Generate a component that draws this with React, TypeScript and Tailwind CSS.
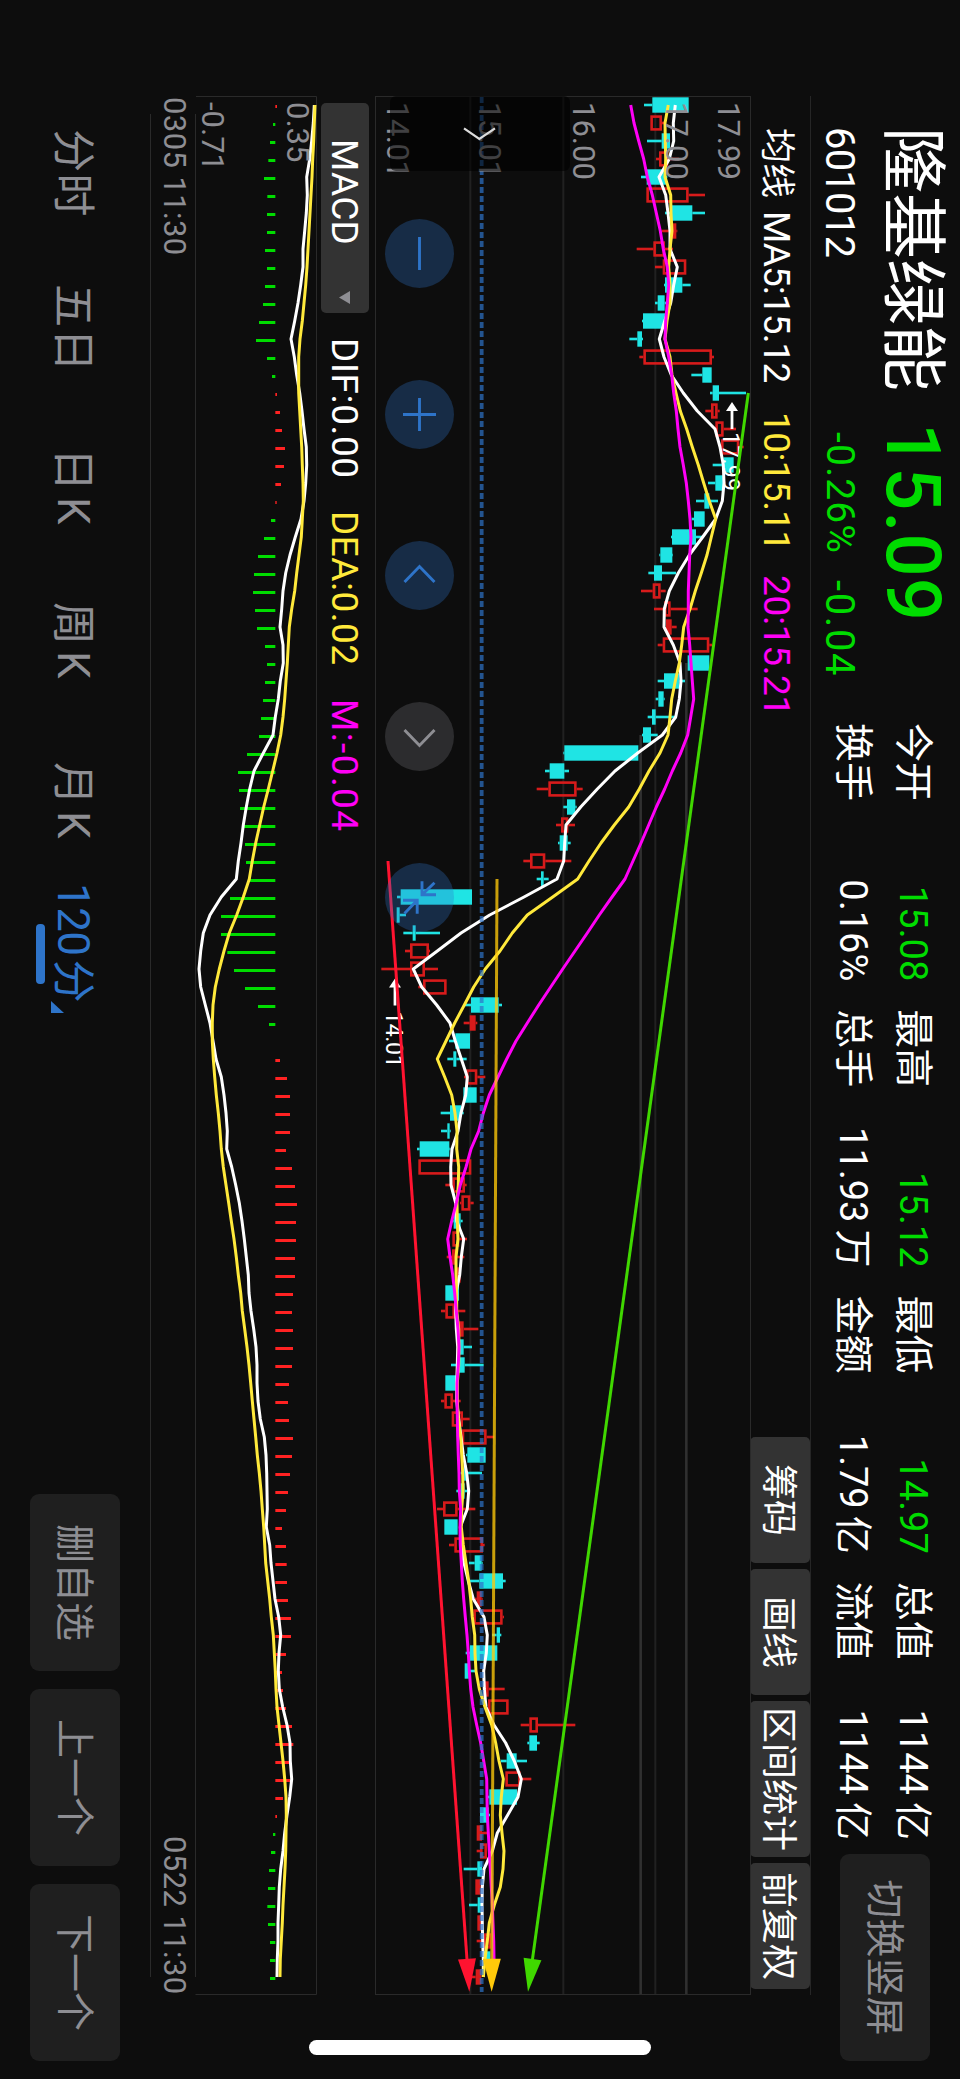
import React from 'react'

type Candle = [up: 0 | 1, bodyLow: number, bodyHigh: number, low: number, high: number]

// Levels are stored in thirds of a pixel above the panel origin
const STEP = 18
const px = (i: number) => 9 + i * STEP
const priceY = (v: number) => 391 - v / 3
const macdY = (v: number) => 177 - v / 3

const candles: Candle[] = [
  [0, 877, 986, 852, 986], [1, 871, 906, 871, 918], [0, 905, 930, 861, 930], [1, 897, 925, 888, 957], [0, 860, 918, 843, 922],
  [1, 859, 986, 859, 1035], [0, 930, 997, 915, 1035], [1, 933, 949, 905, 952], [1, 880, 915, 830, 939], [1, 908, 979, 885, 979],
  [0, 915, 967, 912, 992], [0, 893, 914, 885, 918], [0, 849, 915, 846, 915], [0, 832, 846, 808, 849], [1, 850, 1056, 838, 1062],
  [0, 1027, 1055, 994, 1055], [0, 1058, 1077, 1050, 1158], [1, 1053, 1073, 1036, 1079], [1, 1066, 1091, 1063, 1128], [1, 1083, 1138, 1083, 1151],
  [0, 1090, 1121, 1058, 1121], [0, 1066, 1092, 1044, 1092], [0, 1033, 1048, 1008, 1074], [0, 1002, 1034, 995, 1034], [0, 936, 1008, 933, 1028],
  [0, 901, 937, 898, 939], [0, 882, 906, 865, 948], [1, 878, 902, 843, 917], [1, 912, 932, 882, 1013], [1, 918, 935, 918, 950],
  [1, 908, 1048, 893, 1056], [0, 983, 1048, 983, 1048], [0, 912, 958, 893, 975], [0, 895, 911, 887, 914], [0, 876, 887, 863, 950],
  [0, 849, 873, 846, 893], [0, 613, 835, 610, 835], [0, 569, 613, 555, 627], [1, 565, 650, 530, 668], [0, 621, 646, 610, 650],
  [1, 603, 625, 588, 645], [0, 599, 623, 594, 632], [1, 510, 556, 490, 634], [0, 543, 551, 530, 566], [0, 122, 336, 111, 336],
  [0, 110, 119, 110, 138], [0, 158, 167, 130, 240], [1, 150, 207, 135, 210], [1, 150, 195, 64, 234], [1, 189, 260, 175, 260],
  [0, 333, 416, 314, 426], [1, 329, 347, 311, 352], [0, 286, 330, 267, 330], [0, 280, 289, 262, 320], [1, 318, 352, 312, 376],
  [0, 310, 350, 310, 350], [0, 270, 303, 242, 311], [0, 262, 269, 243, 272], [0, 179, 268, 171, 271], [1, 175, 334, 175, 334],
  [1, 277, 315, 256, 320], [1, 304, 331, 300, 341], [0, 281, 302, 278, 308], [1, 277, 298, 277, 321], [1, 276, 290, 260, 313],
  [1, 288, 302, 288, 302], [0, 256, 297, 256, 297], [1, 256, 285, 243, 316], [1, 293, 311, 293, 355], [0, 296, 311, 296, 336],
  [0, 297, 314, 273, 371], [0, 256, 290, 256, 290], [1, 253, 279, 243, 302], [1, 275, 309, 275, 329], [1, 305, 380, 305, 403],
  [0, 322, 377, 318, 377], [0, 312, 320, 302, 366], [0, 302, 314, 289, 328], [1, 249, 293, 231, 346], [0, 253, 293, 253, 293],
  [1, 283, 369, 267, 374], [0, 344, 365, 327, 368], [0, 358, 429, 326, 437], [1, 350, 365, 345, 368], [1, 340, 428, 340, 432],
  [0, 410, 420, 396, 424], [0, 330, 412, 317, 412], [0, 314, 326, 314, 345], [1, 370, 386, 370, 434], [1, 384, 446, 384, 446],
  [1, 508, 534, 482, 646], [0, 508, 531, 502, 539], [0, 440, 470, 422, 501], [1, 436, 482, 436, 514], [0, 388, 471, 382, 471],
  [0, 360, 386, 360, 390], [1, 350, 366, 350, 382], [1, 360, 381, 350, 381], [0, 352, 366, 311, 366], [1, 346, 362, 346, 362],
  [0, 353, 364, 327, 364], [1, 352, 364, 352, 364], [1, 370, 393, 350, 393], [0, 370, 391, 370, 391], [1, 347, 364, 335, 364],
]

const ma5 = [
  946, 940, 941, 928, 897, 917, 924, 930, 930, 952, 941, 932, 914, 898, 912, 934, 970, 1012, 1065, 1080, 1090, 1092, 1087, 1067, 1028,
  988, 955, 928, 913, 912, 940, 960, 963, 958, 947, 907, 833, 765, 712, 662, 618, 614, 611, 591, 492, 389, 303, 232, 160, 185, 230,
  270, 286, 304, 322, 317, 303, 294, 276, 272, 273, 287, 290, 311, 304, 299, 288, 287, 289, 293, 292, 290, 290, 296, 303, 310, 320,
  326, 322, 301, 305, 312, 325, 340, 372, 382, 379, 371, 373, 378, 402, 437, 463, 484, 474, 443, 412, 397, 372, 367, 366, 367, 368,
  370, 370,
]

const ma10 = [
  925, 915, 916, 917, 915, 932, 933, 936, 930, 926, 930, 930, 921, 915, 930, 936, 948, 961, 980, 997, 1015, 1031, 1048, 1067, 1054,
  1041, 1024, 1006, 990, 971, 965, 958, 946, 935, 930, 924, 900, 867, 838, 806, 763, 723, 687, 653, 578, 502, 457, 420, 376, 341, 313,
  284, 258, 232, 254, 275, 285, 291, 290, 296, 295, 291, 292, 294, 288, 288, 290, 290, 296, 297, 296, 292, 292, 295, 302, 305, 308,
  309, 305, 304, 310, 318, 326, 332, 337, 344, 345, 348, 358, 375, 395, 407, 417, 430, 424, 421, 426, 432, 429, 421, 403, 388, 382,
  375, 370,
]

const ma20 = [
  812, 822, 836, 851, 862, 877, 889, 901, 910, 922, 926, 922, 917, 915, 926, 935, 941, 949, 954, 960, 970, 979, 985, 990, 993, 989,
  987, 985, 985, 984, 989, 993, 997, 1001, 992, 983, 962, 937, 914, 889, 866, 843, 819, 795, 756, 718, 682, 645, 608, 572, 536, 502,
  468, 440, 414, 388, 370, 356, 333, 318, 301, 289, 275, 263, 270, 278, 284, 289, 294, 297, 295, 291, 291, 292, 293, 295, 297, 298,
  302, 300, 301, 304, 307, 311, 316, 321, 325, 328, 332, 339, 350, 362, 371, 380, 381, 382, 385, 388, 391, 394, 397, 399, 401, 402,
]

const macd = [
  411, 399, 390, 385, 372, 382, 381, 381, 375, 381, 375, 369, 357, 348, 381, 396, 411, 420, 426, 435, 432, 423, 410, 393, 372, 354,
  342, 339, 345, 351, 375, 381, 375, 369, 363, 357, 321, 294, 297, 300, 310, 315, 318, 327, 270, 243, 243, 262, 282, 315, 354, 387,
  406, 420, 441, 450, 450, 450, 438, 456, 465, 471, 468, 468, 465, 465, 459, 456, 459, 459, 456, 447, 444, 447, 459, 456, 450, 444,
  438, 426, 438, 440, 441, 444, 453, 453, 438, 426, 429, 438, 456, 460, 450, 450, 429, 411, 399, 393, 387, 384, 382, 384, 390, 390,
  390,
]

const dif = [
  523, 520, 515, 509, 500, 502, 499, 494, 489, 489, 482, 474, 464, 453, 463, 470, 479, 486, 492, 499, 500, 497, 492, 483, 466, 450,
  437, 429, 425, 420, 429, 430, 421, 415, 406, 399, 370, 342, 329, 319, 310, 303, 295, 289, 244, 210, 190, 182, 177, 182, 196, 210,
  219, 228, 244, 252, 258, 262, 260, 275, 287, 298, 306, 313, 319, 325, 327, 333, 341, 348, 351, 351, 354, 361, 373, 378, 380, 381,
  382, 379, 389, 393, 399, 405, 416, 422, 417, 415, 418, 428, 441, 450, 451, 455, 449, 441, 434, 429, 422, 418, 416, 414, 414, 412,
  411,
]

const dea = [
  525, 523, 521, 518, 516, 513, 510, 507, 504, 501, 497, 492, 487, 480, 476, 476, 476, 479, 482, 485, 487, 489, 490, 487, 484, 477,
  470, 464, 455, 448, 445, 442, 438, 434, 429, 422, 411, 398, 385, 371, 359, 347, 337, 328, 310, 290, 268, 252, 238, 226, 219, 217,
  217, 220, 224, 229, 235, 240, 244, 250, 258, 266, 274, 282, 289, 295, 302, 307, 314, 321, 327, 332, 337, 342, 347, 352, 358, 363,
  367, 371, 374, 377, 383, 389, 394, 400, 403, 406, 408, 411, 417, 423, 429, 434, 438, 439, 438, 437, 435, 432, 429, 427, 424, 421,
  420,
]

const line = (data: number[], y: (v: number) => number) => data.map((v, i) => `${px(i)},${y(v).toFixed(1)}`).join(' ')

const stats = [
  { label: '今开', value: '15.08', green: true },
  { label: '最高', value: '15.12', green: true },
  { label: '最低', value: '14.97', green: true },
  { label: '总值', value: '1144', unit: '亿' },
  { label: '换手', value: '0.16%' },
  { label: '总手', value: '11.93', unit: '万' },
  { label: '金额', value: '1.79', unit: '亿' },
  { label: '流值', value: '1144', unit: '亿' },
]

function Header() {
  return (
    <header className="flex h-[149px] pl-[127px]">
      <div className="flex w-[596px] flex-col">
        <div className="flex h-[90px] items-center">
          <h1 className="w-[296px] pt-[7px] text-[66px] leading-none font-normal whitespace-nowrap">隆基绿能</h1>
          <span className="pt-[5px] text-[76px] leading-none font-medium tracking-[1px] text-[#00dc00]">15.09</span>
        </div>
        <div className="flex h-[60px] items-center pt-[3px] text-[40px] leading-none">
          <span className="w-[305px] tracking-[-0.8px]">601012</span>
          <span className="w-[148px] text-[39px] tracking-[1.1px] text-[#00dc00]">-0.26%</span>
          <span className="tracking-[1.6px] text-[#00dc00]">-0.04</span>
        </div>
      </div>
      <div className="mt-[17px] grid h-[120px] w-[1117px] grid-cols-4 grid-rows-2 gap-x-7 text-[38px] leading-none">
        {stats.map((s, i) => (
          <div key={i} className="flex items-center justify-between">
            <span className="text-[39px]">{s.label}</span>
            <span className={s.green ? 'text-[#00dc00]' : 'text-white'}>
              {s.value}
              {s.unit && <span className="ml-[7px]">{s.unit}</span>}
            </span>
          </div>
        ))}
      </div>
      <button className="mt-[30px] ml-[14px] h-[90px] w-[207px] rounded-[9px] bg-[#1f1f1f] pt-[3px] text-[39px] leading-none text-[#8e8e93]">
        切换竖屏
      </button>
    </header>
  )
}

function MaRow() {
  return (
    <div className="ml-[96px] flex h-[61px] w-[1899px] items-center border-t border-[#262626] pl-8 text-[37px] leading-none tracking-[-0.3px]">
      <span className="w-[83px] pt-[6px] text-[35px] tracking-normal">均线</span>
      <span className="w-[201px] pt-[6px] tracking-[-0.9px]">MA5:15.12</span>
      <span className="w-[163px] pt-[6px] tracking-[-0.6px] text-[#ffe93b]">10:15.11</span>
      <span className="pt-[6px] tracking-[-0.3px] text-[#ff00f6]">20:15.21</span>
      <div className="mr-[6px] ml-auto flex gap-[6px] text-[36px] tracking-normal">
        <button className="h-[60px] w-[126px] rounded-[5px] bg-[#333] pt-1">筹码</button>
        <button className="h-[60px] w-[126px] rounded-[5px] bg-[#333] pt-1">画线</button>
        <button className="h-[60px] w-[156px] rounded-[5px] bg-[#333] pt-1">区间统计</button>
        <button className="h-[60px] w-[126px] rounded-[5px] bg-[#333] pt-1">前复权</button>
      </div>
    </div>
  )
}

function CandleMark({ c, i }: { c: Candle; i: number }) {
  const [up, lo, hi, low, high] = c
  const x = px(i)
  const color = up ? '#d71b1b' : '#1fe4e4'
  const top = priceY(hi)
  const h = (hi - lo) / 3
  const hollow = up && h > 6
  return (
    <g>
      {high > hi && <rect x={x - 1.3} y={priceY(high)} width={2.6} height={(high - hi) / 3} fill={color} />}
      {lo > low && <rect x={x - 1.3} y={priceY(lo)} width={2.6} height={(lo - low) / 3} fill={color} />}
      {hollow ? (
        <rect x={x - 6.4} y={top + 1.3} width={12.8} height={h - 2.6} fill="none" stroke={color} strokeWidth={2.6} />
      ) : (
        <rect x={x - 7.7} y={top} width={15.4} height={h} fill={color} />
      )}
    </g>
  )
}

// Trend line ending in a solid arrow head
function Trend({ x1, v1, v2, color, opacity = 1 }: { x1: number; v1: number; v2: number; color: string; opacity?: number }) {
  const x2 = 1895.7
  const y1 = priceY(v1)
  const y2 = priceY(v2)
  const angle = (Math.atan2(y2 - y1, x2 - x1) * 180) / Math.PI
  const len = Math.hypot(x2 - x1, y2 - y1)
  return (
    <g transform={`translate(${x2} ${y2}) rotate(${angle})`} fill={color}>
      <rect x={-len} y={-1.5} width={len - 32} height={3} opacity={opacity} />
      <path d="M0 0L-33 -9V9Z" />
    </g>
  )
}

function PriceChart() {
  return (
    <svg width={1899} height={377} className="block">
      {[331, 610, 886].map(v => (
        <rect key={v} x={1} y={priceY(v) - 1} width={1897} height={2} fill="#212121" />
      ))}
      <rect x={px(31)} y={priceY(979) - 1.3} width={1898 - px(31)} height={2.6} fill="#303030" />
      <rect x={px(35)} y={priceY(842) - 1.3} width={1898 - px(35)} height={2.6} fill="#303030" />
      <rect x={0.5} y={0.5} width={1898} height={375} fill="none" stroke="#2a2a2a" />
      {candles.map((c, i) => (
        <CandleMark key={i} c={c} i={i} />
      ))}
      <g fill="none" strokeWidth={3} strokeLinejoin="round">
        <polyline points={line(ma5, priceY)} stroke="#fff" />
        <polyline points={line(ma10, priceY)} stroke="#ffe93b" />
        <polyline points={line(ma20, priceY)} stroke="#ff00f6" />
      </g>
      <line x1={1} x2={1896} y1={priceY(365)} y2={priceY(365)} stroke="#2e74c9" strokeOpacity={0.7} strokeWidth={3.8} strokeDasharray="6 3" />
      <g fill="#fff" className="text-[23px] tracking-[0.3px]">
        <path d="M306 19l9 -6v4.6h18v2.8h-18v4.6z" />
        <text x={336} y={27.6}>17.99</text>
        <path d="M882.5 356l9 -6v4.6h18v2.8h-18v4.6z" />
        <text x={915} y={364.8} className="tracking-[-0.3px]">14.01</text>
      </g>
      <Trend x1={765} v1={84} v2={328} color="#ff1330" />
      <Trend x1={783} v1={411} v2={395} color="#ffc90a" opacity={0.78} />
      <Trend x1={297} v1={1165} v2={504} color="#40d800" />
      <g fill="#8e8e93" className="text-[31px]">
        <text x={6} y={33}>17.99</text>
        <text x={6} y={85}>17.00</text>
        <text x={6} y={178}>16.00</text>
        <text x={6} y={272} className="tracking-[-0.5px]">15.01</text>
        <text x={6} y={364.5} className="tracking-[-0.5px]">14.01</text>
      </g>
      <rect x={0} y={181} width={75} height={180} rx={6} fill="#000" fillOpacity={0.55} />
      <path d="M32.3 287L43 271.7L32.3 256" fill="none" stroke="#dcdcdc" strokeWidth={2.2} />
    </svg>
  )
}

const tools = [
  { d: 'M-16.5 0H16.5', active: true },
  { d: 'M-16.5 0H16.5M0 -16.5V16.5', active: true },
  { d: 'M6.5 -15L-9 0L6.5 15', active: true },
  { d: 'M-6.5 -15L9 0L-6.5 15', active: false },
  { d: 'M-16.3 -2.5H-2.7V-16.5M-2.7 -2.5L-14.7 -15M16.3 2.3H2.7V16.5M2.7 2.3L16 15', active: true },
]

function ChartTools() {
  return (
    <div className="absolute top-[297px] left-[123px] flex gap-[92px]">
      {tools.map((t, i) => (
        <button key={i} className={`size-[69px] rounded-full ${t.active ? 'bg-[#2e74c9]/30' : 'bg-[#2c2c2e]'}`}>
          <svg viewBox="-34.5 -34.5 69 69" className="size-full" fill="none" strokeWidth={2.9} stroke={t.active ? '#2e74c9' : '#8e8e93'}>
            <path d={t.d} />
          </svg>
        </button>
      ))}
    </div>
  )
}

function MacdRow() {
  return (
    <div className="ml-[103px] flex h-[57px] items-center text-[37px] leading-none tracking-[0.3px] whitespace-nowrap">
      <button className="mr-[25px] flex h-12 w-[210px] items-center justify-between rounded-[5px] bg-[#333] pr-[9px] pl-[36px]">
        <span className="pt-0.5">MACD</span>
        <svg width={13} height={11} className="mt-0.5">
          <path d="M0 0H13L6.5 11Z" fill="#8e8e93" />
        </svg>
      </button>
      <span className="w-[173px] pt-0.5 tracking-[0.6px]">DIF:0.00</span>
      <span className="w-[188px] pt-0.5 tracking-[0.5px] text-[#ffe93b]">DEA:0.02</span>
      <span className="pt-0.5 tracking-[1.4px] text-[#ff00f6]">M:-0.04</span>
    </div>
  )
}

function MacdChart() {
  return (
    <svg width={1899} height={167} className="block">
      <path d="M0.5 121V0.5H1898.5V121.5M18 121.5H1881M18 166.5H1881" fill="none" stroke="#2a2a2a" />
      {macd.map((v, i) => {
        const y = macdY(Math.max(v, 406))
        const h = Math.abs(v - 406) / 3
        return <rect key={i} x={px(i)} y={y} width={3} height={h} fill={v > 406 ? '#ff2222' : '#00dc00'} />
      })}
      <g fill="none" strokeWidth={3} strokeLinejoin="round">
        <polyline points={line(dif, macdY)} stroke="#fff" />
        <polyline points={line(dea, macdY)} stroke="#ffe93b" />
      </g>
      <g fill="#8e8e93" className="text-[31px]">
        <text x={6} y={30}>0.35</text>
        <text x={6} y={115}>-0.71</text>
        <text x={1} y={153.5} className="tracking-[0.4px]">0305 11:30</text>
        <text x={1740} y={153.5} className="tracking-[0.4px]">0522 11:30</text>
      </g>
    </svg>
  )
}

function Footer() {
  return (
    <footer className="flex h-[150px] items-center pl-[129px] text-[43px] leading-none text-[#8e8e93]">
      <span className="w-[155px] pt-1 tracking-[1.5px]">分时</span>
      <span className="w-[164px] pt-1 tracking-[1.5px]">五日</span>
      <span className="w-[154px] pt-1">日<span className="ml-[6px] text-[44px]">K</span></span>
      <span className="w-[160px] pt-1">周<span className="ml-[6px] text-[44px]">K</span></span>
      <span className="w-[121px] pt-1">月<span className="ml-[6px] text-[44px]">K</span></span>
      <span className="relative pt-1 text-[#2e74c9]">
        <span className="mr-[4px] text-[44px] tracking-[-0.6px]">120</span>分
        <i className="absolute top-[54px] left-[41px] h-[9px] w-[60px] rounded-[4px] bg-[#2e74c9]" />
        <svg width={12} height={13} className="absolute top-[35px] left-[118px]">
          <path d="M12 0V13H0Z" fill="#2e74c9" />
        </svg>
      </span>
      <div className="mr-[18px] ml-auto flex gap-[18px] text-[39px]">
        <button className="h-[90px] w-[177px] rounded-[9px] bg-[#1f1f1f] pt-[3px]">删自选</button>
        <button className="h-[90px] w-[177px] rounded-[9px] bg-[#1f1f1f] pt-[3px]">上一个</button>
        <button className="h-[90px] w-[177px] rounded-[9px] bg-[#1f1f1f] pt-[3px]">下一个</button>
      </div>
    </footer>
  )
}

export default function App() {
  return (
    <div className="relative h-[2079px] w-[960px] overflow-hidden bg-[#0d0d0d]">
      {/* Landscape screen turned a quarter clockwise */}
      <div className="absolute top-0 left-[960px] flex h-[960px] w-[2079px] origin-top-left rotate-90 flex-col font-[Roboto,'Noto_Sans_CJK_SC',sans-serif] text-white">
        <Header />
        <MaRow />
        <div className="relative -mt-px ml-[96px]">
          <PriceChart />
          <ChartTools />
        </div>
        <MacdRow />
        <div className="ml-[96px]">
          <MacdChart />
        </div>
        <Footer />
        <div className="absolute top-[309px] left-[2040px] h-[342px] w-[15px] rounded-full bg-white" />
      </div>
    </div>
  )
}
